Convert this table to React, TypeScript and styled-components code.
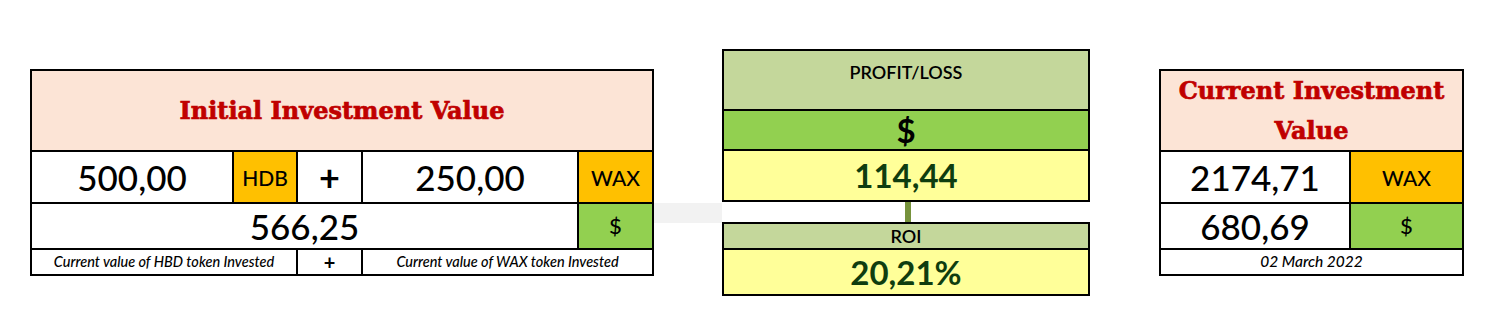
import React from "react";
import styled, { createGlobalStyle } from "styled-components";

const Global = createGlobalStyle`
  html, body { margin: 0; padding: 0; background: #ffffff; }
  body { font-family: Lato, "Open Sans", sans-serif; color: #000; }
`;

const Page = styled.div`
  display: flex;
  align-items: flex-start;
  padding: 49px 0 0 30px;
  width: 1492px;
  height: 327px;
  box-sizing: border-box;
`;

const Table = styled.div<{ $cols: string; $rows: string; $top?: number }>`
  display: grid;
  grid-template-columns: ${(p) => p.$cols};
  grid-template-rows: ${(p) => p.$rows};
  gap: 2px;
  padding: 2px;
  background: #000;
  margin-top: ${(p) => p.$top ?? 0}px;
  flex: none;
`;

const Cell = styled.div<{ $bg?: string; $span?: number; $align?: string }>`
  background: ${(p) => p.$bg ?? "#ffffff"};
  grid-column: span ${(p) => p.$span ?? 1};
  display: flex;
  align-items: ${(p) => p.$align ?? "center"};
  justify-content: center;
  text-align: center;
  min-width: 0;
  min-height: 0;
`;

const Title = styled.div`
  font-family: "DejaVu Serif", "Liberation Serif", serif;
  font-weight: 700;
  font-size: 24px;
  line-height: 40px;
  color: #c00000;
  -webkit-text-stroke: 0.7px #c00000;
`;

const Amount = styled.span<{ $color?: string; $weight?: number; $size?: number }>`
  font-family: Lato, sans-serif;
  font-size: ${(p) => p.$size ?? 35}px;
  font-weight: ${(p) => p.$weight ?? 500};
  color: ${(p) => p.$color ?? "#000"};
  line-height: 1;
`;

const Unit = styled.span<{ $size?: number; $weight?: number }>`
  font-family: Lato, sans-serif;
  font-size: ${(p) => p.$size ?? 21}px;
  font-weight: ${(p) => p.$weight ?? 500};
  line-height: 1;
`;

const Note = styled.span<{ $size?: number }>`
  font-family: Lato, sans-serif;
  font-style: italic;
  font-weight: 500;
  font-size: ${(p) => p.$size ?? 14.5}px;
  line-height: 1;
  white-space: nowrap;
`;

const Label = styled.span<{ $pad?: number }>`
  font-family: Lato, sans-serif;
  font-size: 18px;
  font-weight: 600;
  line-height: 1;
  padding-top: ${(p) => p.$pad ?? 0}px;
`;

const GrayLink = styled.div`
  flex: none;
  width: 68px;
  height: 20px;
  margin-top: 154px;
  background: #f2f2f2;
`;

const Middle = styled.div`
  flex: none;
  display: flex;
  flex-direction: column;
  width: 368px;
`;

const Stem = styled.div`
  width: 6px;
  height: 20px;
  margin-left: 183px;
  background: #76923c;
`;

const Spacer = styled.div<{ $w: number }>`
  flex: none;
  width: ${(p) => p.$w}px;
`;

const PEACH = "#fce4d6";
const ORANGE = "#ffc000";
const GREEN = "#92d050";
const OLIVE = "#c4d79b";
const YELLOW = "#ffff99";
const DARKGREEN = "#0f3d0f";

export default function App() {
  return (
    <>
      <Global />
      <Page>
        <Table $cols="200px 62px 63px 214px 73px" $rows="79px 50px 44px 24px" $top={20}>
          <Cell $bg={PEACH} $span={5}>
            <Title>Initial Investment Value</Title>
          </Cell>
          <Cell>
            <Amount>500,00</Amount>
          </Cell>
          <Cell $bg={ORANGE}>
            <Unit>HDB</Unit>
          </Cell>
          <Cell>
            <Unit $size={36} $weight={700}>+</Unit>
          </Cell>
          <Cell>
            <Amount>250,00</Amount>
          </Cell>
          <Cell $bg={ORANGE}>
            <Unit>WAX</Unit>
          </Cell>
          <Cell $span={4}>
            <Amount>566,25</Amount>
          </Cell>
          <Cell $bg={GREEN}>
            <Unit $size={22}>$</Unit>
          </Cell>
          <Cell $span={2}>
            <Note>Current value of HBD token Invested</Note>
          </Cell>
          <Cell>
            <Unit $size={20} $weight={700}>+</Unit>
          </Cell>
          <Cell $span={2}>
            <Note>Current value of WAX token Invested</Note>
          </Cell>
        </Table>

        <GrayLink />

        <Middle>
          <Table $cols="364px" $rows="58px 38px 49px">
            <Cell $bg={OLIVE} $align="flex-start">
              <Label $pad={12}>PROFIT/LOSS</Label>
            </Cell>
            <Cell $bg={GREEN}>
              <Unit $size={33} $weight={700}>$</Unit>
            </Cell>
            <Cell $bg={YELLOW}>
              <Amount $color={DARKGREEN} $weight={700} $size={33}>114,44</Amount>
            </Cell>
          </Table>
          <Stem />
          <Table $cols="364px" $rows="24px 44px">
            <Cell $bg={OLIVE}>
              <Label>ROI</Label>
            </Cell>
            <Cell $bg={YELLOW}>
              <Amount $color={DARKGREEN} $weight={700} $size={33}>20,21%</Amount>
            </Cell>
          </Table>
        </Middle>

        <Spacer $w={69} />

        <Table $cols="188px 111px" $rows="79px 50px 44px 24px" $top={20}>
          <Cell $bg={PEACH} $span={2}>
            <Title>Current Investment Value</Title>
          </Cell>
          <Cell>
            <Amount>2174,71</Amount>
          </Cell>
          <Cell $bg={ORANGE}>
            <Unit>WAX</Unit>
          </Cell>
          <Cell>
            <Amount>680,69</Amount>
          </Cell>
          <Cell $bg={GREEN}>
            <Unit $size={22}>$</Unit>
          </Cell>
          <Cell $span={2}>
            <Note $size={15.5}>02 March 2022</Note>
          </Cell>
        </Table>
      </Page>
    </>
  );
}
